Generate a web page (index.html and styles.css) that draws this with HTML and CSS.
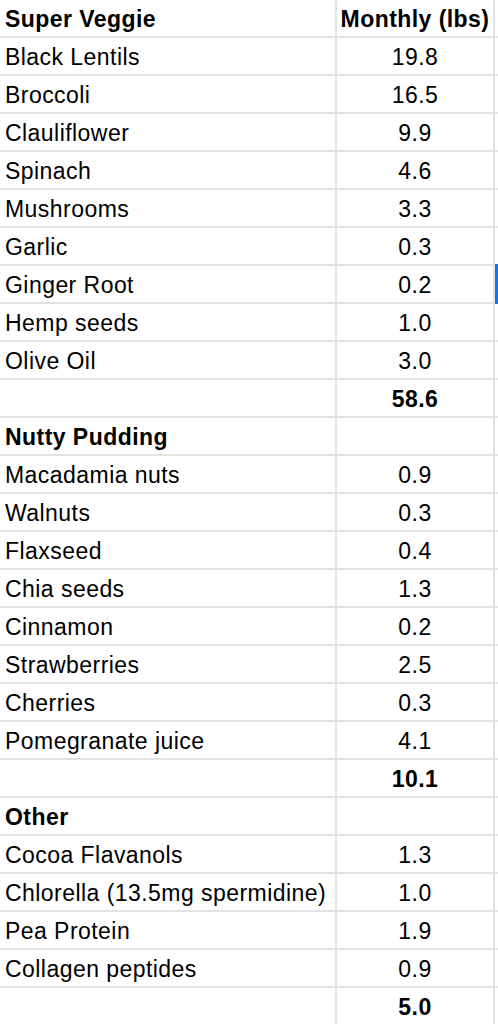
FILE: index.html
```html
<!DOCTYPE html>
<html>
<head>
<meta charset="utf-8">
<link rel="stylesheet" href="styles.css">
</head>
<body>
<div class="sheet">
  <div class="row"><div class="c name b">Super Veggie</div><div class="c val b">Monthly (lbs)</div></div>
  <div class="row"><div class="c name">Black Lentils</div><div class="c val">19.8</div></div>
  <div class="row"><div class="c name">Broccoli</div><div class="c val">16.5</div></div>
  <div class="row"><div class="c name">Clauliflower</div><div class="c val">9.9</div></div>
  <div class="row"><div class="c name">Spinach</div><div class="c val">4.6</div></div>
  <div class="row"><div class="c name">Mushrooms</div><div class="c val">3.3</div></div>
  <div class="row"><div class="c name">Garlic</div><div class="c val">0.3</div></div>
  <div class="row sel"><div class="c name">Ginger Root</div><div class="c val">0.2</div></div>
  <div class="row"><div class="c name">Hemp seeds</div><div class="c val">1.0</div></div>
  <div class="row"><div class="c name">Olive Oil</div><div class="c val">3.0</div></div>
  <div class="row"><div class="c name"></div><div class="c val b">58.6</div></div>
  <div class="row"><div class="c name b">Nutty Pudding</div><div class="c val"></div></div>
  <div class="row"><div class="c name">Macadamia nuts</div><div class="c val">0.9</div></div>
  <div class="row"><div class="c name">Walnuts</div><div class="c val">0.3</div></div>
  <div class="row"><div class="c name">Flaxseed</div><div class="c val">0.4</div></div>
  <div class="row"><div class="c name">Chia seeds</div><div class="c val">1.3</div></div>
  <div class="row"><div class="c name">Cinnamon</div><div class="c val">0.2</div></div>
  <div class="row"><div class="c name">Strawberries</div><div class="c val">2.5</div></div>
  <div class="row"><div class="c name">Cherries</div><div class="c val">0.3</div></div>
  <div class="row"><div class="c name">Pomegranate juice</div><div class="c val">4.1</div></div>
  <div class="row"><div class="c name"></div><div class="c val b">10.1</div></div>
  <div class="row"><div class="c name b">Other</div><div class="c val"></div></div>
  <div class="row"><div class="c name">Cocoa Flavanols</div><div class="c val">1.3</div></div>
  <div class="row"><div class="c name">Chlorella (13.5mg spermidine)</div><div class="c val">1.0</div></div>
  <div class="row"><div class="c name">Pea Protein</div><div class="c val">1.9</div></div>
  <div class="row"><div class="c name">Collagen peptides</div><div class="c val">0.9</div></div>
  <div class="row"><div class="c name"></div><div class="c val b">5.0</div></div>
</div>
</body>
</html>
```
FILE: styles.css
```css
html, body {
  margin: 0;
  padding: 0;
  background: #ffffff;
  overflow: hidden;
}
.sheet {
  width: 498px;
  font-family: "Liberation Sans", Arial, sans-serif;
  font-size: 23px;
  letter-spacing: 0.45px;
  color: #000;
}
.row {
  position: relative;
  display: grid;
  grid-template-columns: 337px 158px;
  height: 38px;
  box-sizing: border-box;
  border-bottom: 2px solid #e2e2e2;
}
.c {
  box-sizing: border-box;
  white-space: nowrap;
  padding-top: 3px;
  line-height: 33px;
  border-right: 2px solid #e2e2e2;
  overflow: visible;
}
.name {
  padding-left: 5px;
}
.val {
  text-align: center;
}
.b {
  font-weight: bold;
}
.sel::after {
  content: "";
  position: absolute;
  right: 0;
  top: -2px;
  width: 3px;
  height: 40px;
  background: #1a73e8;
}
```
